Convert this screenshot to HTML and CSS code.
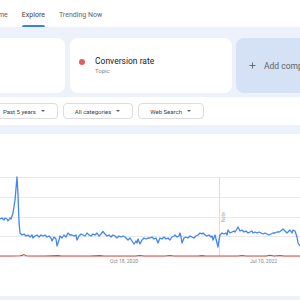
FILE: index.html
```html
<!DOCTYPE html>
<html lang="en">
<head>
<meta charset="utf-8">
<title>Explore - Google Trends</title>
<link rel="stylesheet" href="styles.css">
</head>
<body>
<header class="topbar">
  <nav class="tabs">
    <a class="tab"><span class="tab-label">Home</span><span class="tab-indicator"></span></a>
    <a class="tab active"><span class="tab-label">Explore</span><span class="tab-indicator"></span></a>
    <a class="tab"><span class="tab-label">Trending Now</span><span class="tab-indicator"></span></a>
  </nav>
</header>
<main class="content">
  <section class="terms">
    <div class="term-card"></div>
    <div class="term-card term">
      <span class="dot dot-red"></span>
      <div class="term-text">
        <div class="term-name">Conversion rate</div>
        <div class="term-type">Topic</div>
      </div>
    </div>
    <div class="term-card add">
      <svg class="plus" width="7" height="7" viewBox="0 0 7 7"><path d="M3.5 0.5V6.5M0.5 3.5H6.5" stroke="#5f6368" stroke-width="0.9" fill="none"/></svg>
      <span class="add-label">Add comparison</span>
    </div>
  </section>
  <section class="filters">
    <div class="chips">
      <button class="chip"><span>Past 5 years</span><span class="caret"></span></button>
      <button class="chip"><span>All categories</span><span class="caret"></span></button>
      <button class="chip"><span>Web Search</span><span class="caret"></span></button>
    </div>
  </section>
  <section class="chart-card">
    <svg class="chart" width="300" height="162" viewBox="0 134 300 162">
      <g class="grid" stroke="#e8eaed" stroke-width="1">
        <line x1="0" y1="177.5" x2="300" y2="177.5"/>
        <line x1="0" y1="197.5" x2="300" y2="197.5"/>
        <line x1="0" y1="217.5" x2="300" y2="217.5"/>
        <line x1="0" y1="236.5" x2="300" y2="236.5"/>
        <line x1="0" y1="256.5" x2="300" y2="256.5"/>
      </g>
      <line x1="219.5" y1="177" x2="219.5" y2="256" stroke="#dadce0" stroke-width="1"/>
      <text x="224.6" y="222" transform="rotate(-90 224.6 222)" class="note">Note</text>
      <polyline fill="none" stroke="#db4437" stroke-width="1.1" stroke-linejoin="round"
        points="0,256 10,256 20,255.8 22,255.4 24,254.6 26,255.8 30,256 45,256 58,255.6 62,256 90,256 100,255.6 104,256 135,256 140,255.5 144,256 165,256 170,255.5 174,256 198,256 202,255.6 206,256 238,256 242,255.5 246,256 266,256 270,255.3 274,256 280,255.5 284,256 300,256"/>
      <polyline fill="none" stroke="#4285f4" stroke-width="1.3" stroke-linejoin="round"
        points="0,219 2,218 4,220 5,218 7,219 8,221 10,218 11,219 13,213 15,200 17,177 18,195 19,222 20,233 22,235 24,234 26,236 28,235 30,237 32,235 33,238 35,236 37,235 39,237 41,235 43,236 45,235 47,237 49,236 51,238 52,241 54,237 56,239 57,246 59,240 60,236 62,238 64,235 66,237 68,233 70,235 72,235 74,236 76,235 77,240 79,236 81,234 83,235 85,236 87,233 89,235 91,236 93,234 95,235 97,233 99,236 101,234 103,231.5 105,234 107,236 109,235 111,237 113,235 115,236 117,238 119,236 121,237 123,236 125,237 128,240 130,238 132,241 134,244 136,241 137,243 138,239 140,244 142,240 144,238 146,239 148,238 150,238 152,237 154,239 156,238 158,243 160,238 162,239 164,237 166,239 168,238 170,240 172,237 174,236 175,235 177,237 179,236 180,233 181,237 182,243 184,238 186,237 188,238 190,236 192,237 194,238 196,236 198,235 200,233 202,234 203,233 205,235 207,236 209,235 211,237 212,236 213,240 215,235 217,243 218,247 219,240 220,235 222,233 224,234 226,233 227,235 228,230 230,233 232,232 234,231 235,232 237,229 238,227 240,231 242,230 244,232 246,231 248,233 250,232 252,231 253,233 255,232 257,233 259,232 261,233 263,234 265,233 267,234 269,235 271,234 273,233 275,233 277,232 279,232 280,231.5 282,230 283,229 285,231 287,233 289,231 290,230 292,233 293,230 295,231 296,234 297,237 298,243 300,246"/>
      <text x="110" y="263" class="axis">Oct 18, 2020</text>
      <text x="250" y="263" class="axis">Jul 10, 2022</text>
    </svg>
  </section>
</main>
</body>
</html>
```
FILE: styles.css
```css
* { box-sizing: border-box; }
html, body { margin: 0; padding: 0; }
body {
  width: 300px;
  height: 300px;
  overflow: hidden;
  background: #edf2fa;
  font-family: Roboto, "Noto Sans", Arial, sans-serif;
  color: #202124;
}

.topbar {
  height: 27px;
  background: #ffffff;
  display: flex;
}
.tabs {
  display: flex;
  gap: 14px;
  margin-left: -11px;
}
.tab {
  display: flex;
  flex-direction: column;
  align-items: stretch;
  padding-top: 10px;
  color: #5f6368;
  font-size: 7px;
  line-height: 10px;
  white-space: nowrap;
}
.tab-indicator {
  margin-top: auto;
  height: 2px;
  border-radius: 2px 2px 0 0;
}
.tab.active .tab-label { color: #3c4043; }
.tab.active .tab-indicator { background: #3b7ded; }

.content {
  padding-top: 11px;
}

.terms {
  display: flex;
  height: 55px;
  margin-left: -97px;
}
.term-card {
  flex: 0 0 162px;
  background: #ffffff;
  border-radius: 8px;
  margin-right: 5px;
}
.term-card.term {
  margin-right: 4px;
  display: flex;
  align-items: center;
  padding-left: 9px;
}
.dot {
  width: 6px;
  height: 6px;
  border-radius: 50%;
  margin-right: 10px;
  align-self: flex-start;
  margin-top: 21px;
}
.dot-red { background: #e06055; }
.term-name {
  font-size: 8.5px;
  line-height: 10px;
  color: #202124;
  white-space: nowrap;
}
.term-type {
  font-size: 6px;
  line-height: 8px;
  margin-top: 1px;
  color: #80868b;
}
.term-card.add {
  background: #d5e1f5;
  display: flex;
  align-items: center;
  padding-left: 13px;
  margin-right: 0;
}
.plus { display: block; margin-right: 8px; }
.add-label {
  font-size: 8.5px;
  color: #5f6368;
  white-space: nowrap;
}

.filters {
  margin-top: 4px;
  height: 28px;
  background: #ffffff;
  padding-top: 6px;
}
.chips {
  display: flex;
  gap: 5px;
  margin-left: -9px;
}
.chip {
  display: flex;
  align-items: center;
  gap: 5px;
  height: 16px;
  padding: 0 12px 0 11px;
  border: 1px solid #dadce0;
  border-radius: 4px;
  background: #ffffff;
  font-family: inherit;
  font-size: 6px;
  color: #3c4043;
  white-space: nowrap;
}
.caret {
  width: 0;
  height: 0;
  border-left: 2px solid transparent;
  border-right: 2px solid transparent;
  border-top: 2.5px solid #5f6368;
}

.chart-card {
  margin-top: 9px;
  height: 162px;
  background: #ffffff;
}
.chart { display: block; }
.axis {
  font-family: Roboto, "Noto Sans", Arial, sans-serif;
  font-size: 5px;
  fill: #80868b;
}
.note {
  font-family: Roboto, "Noto Sans", Arial, sans-serif;
  font-size: 4.5px;
  fill: #9aa0a6;
}
```
